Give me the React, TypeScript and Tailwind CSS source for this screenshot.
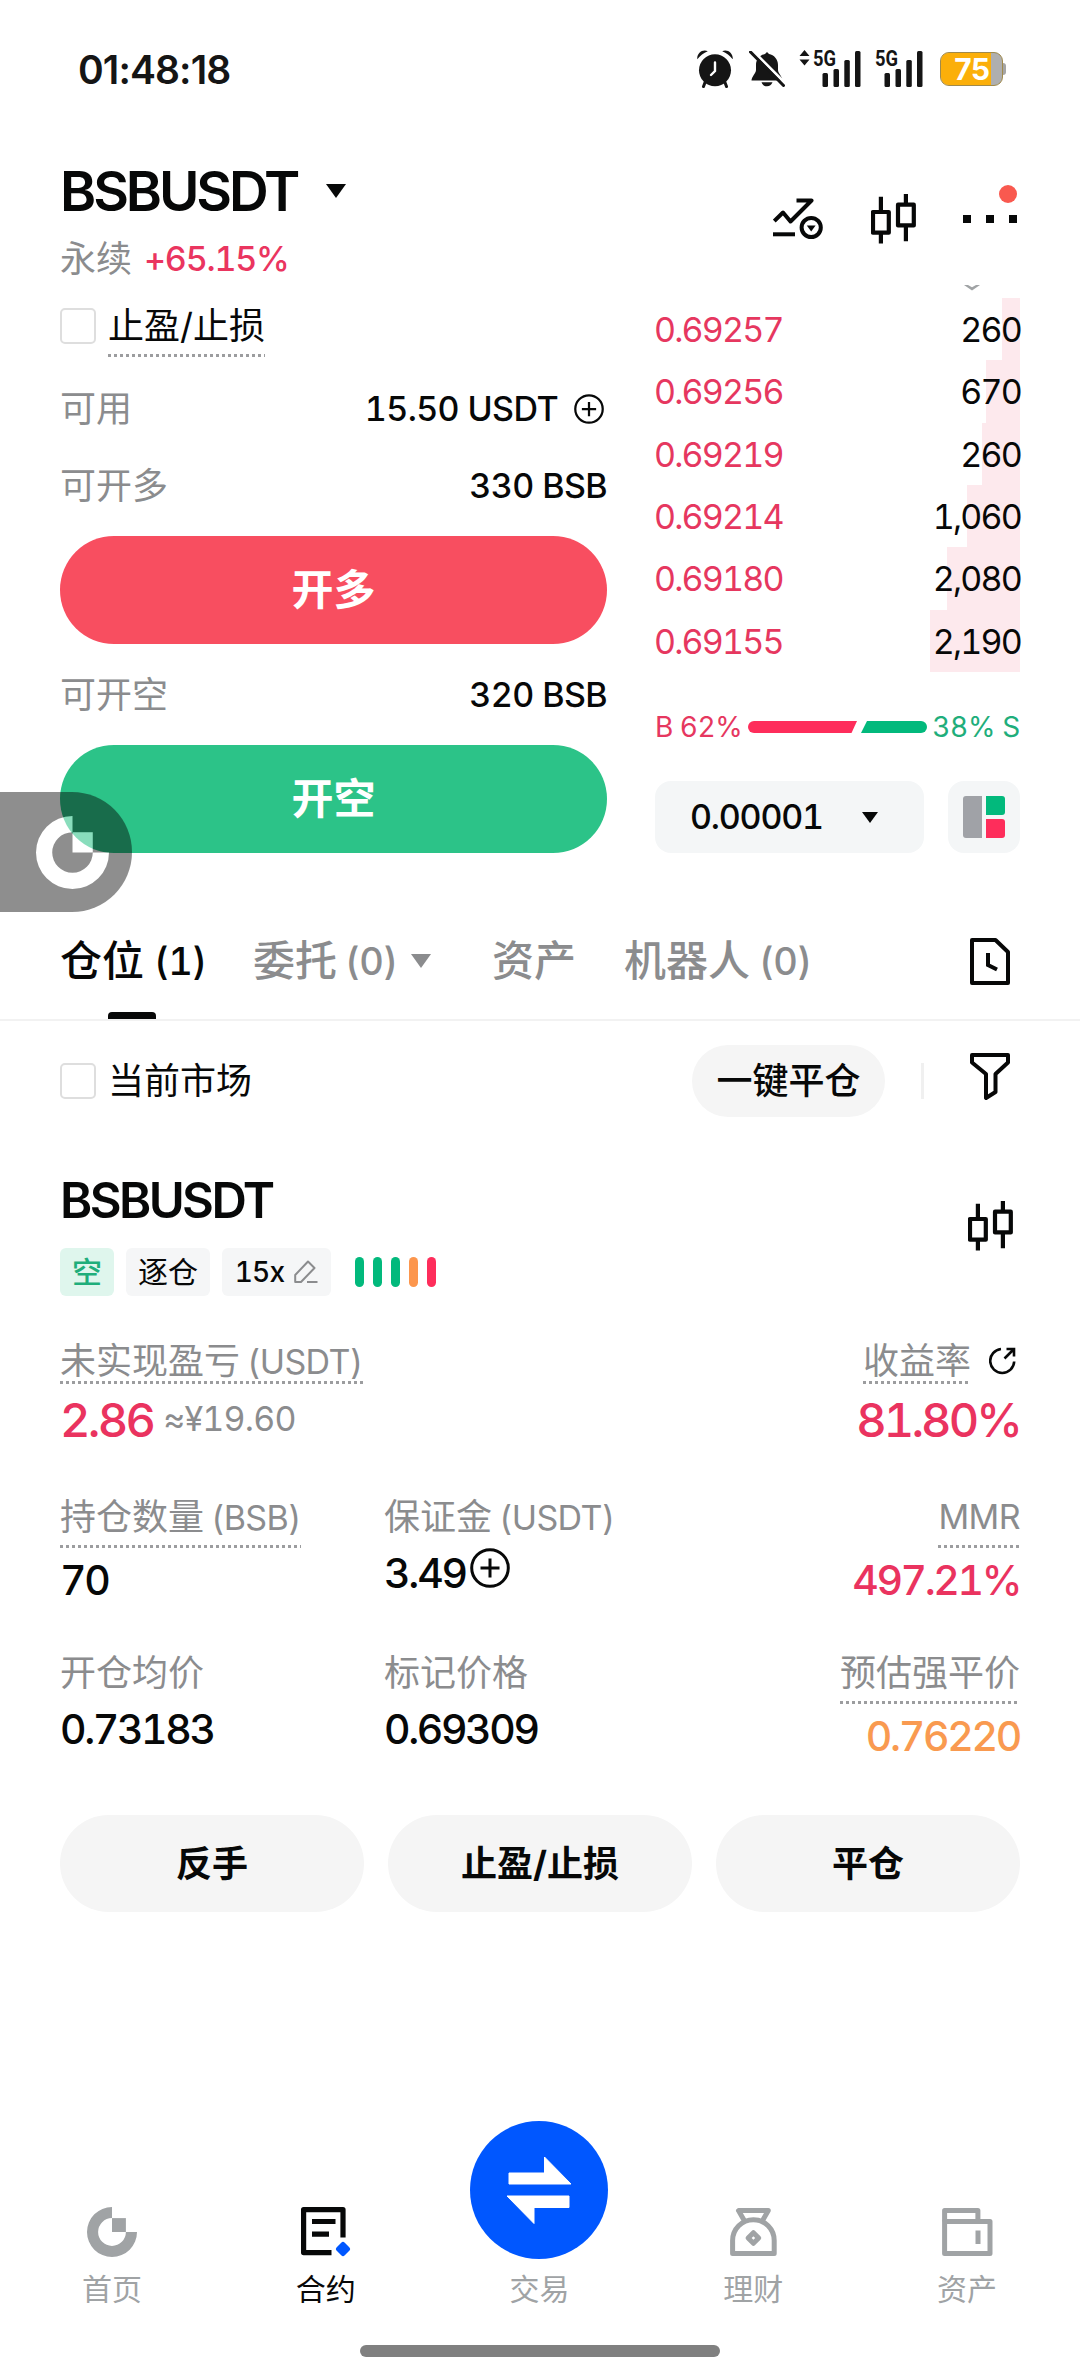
import type { ReactNode } from 'react';

interface IconProps {
  className?: string;
}

const asks = [
  { price: '0.69257', amount: '260', depth: 18 },
  { price: '0.69256', amount: '670', depth: 34 },
  { price: '0.69219', amount: '260', depth: 38 },
  { price: '0.69214', amount: '1,060', depth: 53 },
  { price: '0.69180', amount: '2,080', depth: 73 },
  { price: '0.69155', amount: '2,190', depth: 90 },
];

const riskBars = ['bg-[#02b97c]', 'bg-[#02b97c]', 'bg-[#02b97c]', 'bg-[#fc964d]', 'bg-[#fe2d5b]'];

function AlarmIcon() {
  return (
    <svg width="36" height="38" viewBox="0 0 36 38" fill="#151515">
      <circle cx="18" cy="20.3" r="16" />
      <path d="M0.3 9.3C-0.5 3.5 5.5-1.3 10.8 1.3C6.5 3 3.2 5.7 0.3 9.3ZM35.7 9.3C36.5 3.5 30.5-1.3 25.2 1.3C29.5 3 32.8 5.7 35.7 9.3Z" />
      <path d="M8 32.5L6.5 36.5M28 32.5L29.5 36.5" stroke="#151515" strokeWidth="3" strokeLinecap="round" />
      <path d="M18 12.5V21L14 25" stroke="#fff" strokeWidth="2.4" strokeLinecap="round" fill="none" />
    </svg>
  );
}

function BellOffIcon() {
  return (
    <svg width="36" height="36" viewBox="0 0 36 36" fill="#151515">
      <path d="M18 1L20 3C25 4 29 8 29 14V19C29 22 33.5 26 33.5 29.5H2.5C2.5 26 7 22 7 19V14C7 8 11 4 16 3Z" />
      <path d="M12.5 31.3H23.5C22.5 34 20.5 35.2 18 35.2S13.5 34 12.5 31.3Z" />
      <path d="M3.5 -0.5L37 33" stroke="#fff" strokeWidth="3" />
      <path d="M1.5 1L34.5 34.5" stroke="#151515" strokeWidth="3" strokeLinecap="round" />
    </svg>
  );
}

function Signal({ arrows = false }: { arrows?: boolean }) {
  return (
    <svg
      className="-my-2"
      width={arrows ? 62 : 49}
      height="54"
      viewBox={arrows ? '-14 -8 62 54' : '-1 -8 49 54'}
      fill="#151515"
    >
      {arrows && <path d="M-13.5 6L-8.5 0L-3.5 6ZM-13.5 9.5L-8.5 15.5L-3.5 9.5Z" />}
      <text
        x="0"
        y="16"
        fontSize="22"
        fontWeight="700"
        textLength="23"
        lengthAdjust="spacingAndGlyphs"
        fontFamily="Roboto, sans-serif"
      >
        5G
      </text>
      <rect x="9.5" y="23" width="5.5" height="14" rx="1.5" />
      <rect x="20.5" y="19" width="5.5" height="18" rx="1.5" />
      <rect x="31.3" y="10" width="5.5" height="27" rx="1.5" />
      <rect x="42" y="1" width="5.5" height="36" rx="1.5" />
    </svg>
  );
}

function TrendIcon() {
  return (
    <svg width="50" height="42" viewBox="0 0 50 42" fill="none" stroke="#070808" strokeWidth="4">
      <path d="M1.3 23L10 14.5L17.5 23.5L38.5 2.5H23.5" strokeLinejoin="round" />
      <path d="M0 36.3H22" />
      <circle cx="38.2" cy="29.5" r="9.6" />
      <path d="M33.8 27.5H42.6L38.2 33.5Z" fill="#070808" stroke="none" />
    </svg>
  );
}

function CandleIcon({ className }: IconProps) {
  return (
    <svg className={className} width="45" height="50" viewBox="0 0 45 50" fill="none" stroke="#070808" strokeWidth="4.2">
      <path d="M9.9 2.7V17M9.9 40V49.5M34.9 0V9M34.9 32V47.2" />
      <rect x="2" y="18" width="15.8" height="20.7" strokeLinejoin="round" />
      <rect x="27" y="10.7" width="15.8" height="20.7" strokeLinejoin="round" />
    </svg>
  );
}

function PlusCircle({ className }: IconProps) {
  return (
    <svg className={className} viewBox="0 0 40 40" fill="none" stroke="#070808" strokeWidth="3">
      <circle cx="20" cy="20" r="18.3" />
      <path d="M20 10.5V29.5M10.5 20H29.5" />
    </svg>
  );
}

function HistoryIcon() {
  return (
    <svg width="40" height="47" viewBox="0 0 40 47" fill="none" stroke="#070808" strokeWidth="4" strokeLinejoin="round">
      <path d="M2 2H25.5L38 14V45H2Z" />
      <path d="M18 15V27L27 31.5" strokeLinejoin="miter" />
    </svg>
  );
}

function FilterIcon() {
  return (
    <svg width="40" height="47" viewBox="0 0 40 47" fill="none" stroke="#070808" strokeWidth="4" strokeLinejoin="round">
      <path d="M2 2H38V9.5L25.5 21V39L16 45V21L2 9.5Z" />
    </svg>
  );
}

function PencilIcon() {
  return (
    <svg width="24" height="24" viewBox="0 0 24 24" fill="none" stroke="#8b8c8e" strokeWidth="2">
      <path d="M1.2 22V15L14 1.5L20.5 8L7 22Z" strokeLinejoin="round" />
      <path d="M13 22H23.5" />
    </svg>
  );
}

function ShareIcon() {
  return (
    <svg width="27" height="28" viewBox="0 0 27 28" fill="none" stroke="#070808" strokeWidth="2.6">
      <path d="M12 2A12 12 0 1 0 25.2 14.5" />
      <path d="M15.5 11.5L24.5 2.5M17.5 2H25V9.5" />
    </svg>
  );
}

// ring with an open upper right quarter and a square tucked into it
function BrandMark({ className }: IconProps) {
  return (
    <svg className={className} viewBox="0 0 72 72" fill="currentColor">
      <path d="M36 0A36 36 0 1 0 72 36H56A20 20 0 1 1 36 16Z" />
      <path d="M36 16H56V36H36Z" />
    </svg>
  );
}

function ContractIcon() {
  return (
    <svg width="50" height="50" viewBox="0 0 50 50" fill="none" stroke="#070808" strokeWidth="5.2">
      <path d="M42 30.5V2.6H2.6V45.6H30.5" strokeLinejoin="round" />
      <path d="M11 14.5H34.5M11 27.2H28" />
      <path d="M42 37.5L46.5 42L42 46.5L37.5 42Z" fill="#0057ff" stroke="#0057ff" strokeWidth="5" strokeLinejoin="round" />
    </svg>
  );
}

function TransferIcon() {
  return (
    <svg width="66" height="68" viewBox="0 0 66 68" fill="#fff" stroke="#fff" strokeWidth="1" strokeLinejoin="round">
      <path d="M3 17H38.5V1L65 28H3Z" />
      <path d="M63 51.5H28V67.5L1 40H63Z" />
    </svg>
  );
}

function MoneyBagIcon() {
  return (
    <svg width="47" height="49" viewBox="0 0 47 49" fill="none" stroke="#a0a3a5" strokeWidth="5" strokeLinejoin="round">
      <path d="M14.5 13L8.5 2.6H38.3L32.3 13" />
      <path d="M2.6 45.6V32.5A20.8 20.8 0 0 1 44.2 32.5V45.6Z" />
      <path d="M23.4 24.7L28.7 30L23.4 35.3L18.1 30Z" />
    </svg>
  );
}

function WalletIcon() {
  return (
    <svg width="51" height="49" viewBox="0 0 51 49" fill="none" stroke="#a0a3a5" strokeWidth="5" strokeLinejoin="round">
      <path d="M2.6 13.5V2.6H35.9V13.5" />
      <path d="M2.6 13.5H48V45.5H2.6Z" />
      <path d="M36 22.5V36" />
    </svg>
  );
}

function Caret({ className }: IconProps) {
  return (
    <svg className={className} viewBox="0 0 20 14" preserveAspectRatio="none" fill="currentColor">
      <path d="M0 0H20L10 14Z" />
    </svg>
  );
}

function Dotted({ children, gap = 'mt-0.5' }: { children: ReactNode; gap?: string }) {
  return (
    <div className="flex flex-col">
      <div className="flex h-12 items-center whitespace-nowrap">{children}</div>
      <div className={`h-[3px] bg-[repeating-linear-gradient(90deg,#9c9d9f_0_3px,transparent_3px_6px)] ${gap}`} />
    </div>
  );
}

function Checkbox() {
  return <div className="size-9 shrink-0 rounded-[5px] border-[2.5px] border-[#dedede]" />;
}

function Latin({ children }: { children: ReactNode }) {
  return <span className="text-[34px] tracking-[-0.6px]">{children}</span>;
}

function StatRow({ label, value, children }: { label: string; value: string; children?: ReactNode }) {
  return (
    <div className="flex h-12 items-center justify-between">
      <span className="text-[#8b8c8e]">{label}</span>
      <div className="flex items-center">
        <span className="text-[34px] font-medium tracking-[-0.6px]">{value}</span>
        {children}
      </div>
    </div>
  );
}

function StatusBar() {
  return (
    <div className="flex h-[138px] items-center justify-between pr-[74px] pl-[78px]">
      <span className="text-[39px] font-semibold tracking-[-0.9px] text-[#151515] proportional-nums">01:48:18</span>
      <div className="flex items-center">
        <AlarmIcon />
        <div className="ml-4">
          <BellOffIcon />
        </div>
        <div className="ml-3.5 flex gap-[13px]">
          <Signal arrows />
          <Signal />
        </div>
        <div className="ml-[17px] flex items-center">
          <div className="flex h-[34px] w-[63px] overflow-hidden rounded-[9px] border border-[#a08a4c] bg-[#afafaf]">
            <div className="flex w-[50px] items-center justify-end bg-[#fbaf0a] pr-0.5 text-[30px] leading-none font-bold tracking-[-1.5px] text-white">
              75
            </div>
          </div>
          <div className="h-3 w-[3px] rounded-r-sm bg-[#a5a5a5]" />
        </div>
      </div>
    </div>
  );
}

function Header() {
  return (
    <div className="flex h-[147px] justify-between px-[60px] pt-[23px]">
      <div>
        <div className="flex h-[60px] items-center">
          <h1 className="text-[55px] font-semibold tracking-[-3.1px]">BSBUSDT</h1>
          <Caret className="ml-[29px] h-3.5 w-5" />
        </div>
        <div className="mt-[15px] flex h-[46px] items-center">
          <span className="text-[#8b8c8e]">永续</span>
          <span className="ml-3 text-[34px] font-medium tracking-[-1.2px] text-[#ea355f]">+65.15%</span>
        </div>
      </div>
      <div className="flex h-[115px] items-center">
        <TrendIcon />
        <CandleIcon className="ml-12" />
        <div className="relative mr-[3px] ml-[47px] flex gap-[15px]">
          <div className="size-2 bg-[#070808]" />
          <div className="size-2 bg-[#070808]" />
          <div className="size-2 bg-[#070808]" />
          <div className="absolute -top-[30px] right-0 size-[18px] rounded-full bg-[#f9594f]" />
        </div>
      </div>
    </div>
  );
}

function OrderForm() {
  return (
    <div className="w-[547px] pt-[17px]">
      <div className="flex gap-3">
        <div className="pt-1.5">
          <Checkbox />
        </div>
        <Dotted gap="mt-1">止盈/止损</Dotted>
      </div>
      <div className="mt-7">
        <StatRow label="可用" value="15.50 USDT">
          <PlusCircle className="mr-[3px] ml-4 size-[30px]" />
        </StatRow>
      </div>
      <div className="mt-[29px]">
        <StatRow label="可开多" value="330 BSB" />
      </div>
      <button className="mt-[26px] flex h-[108px] w-full items-center justify-center rounded-full bg-[#f84e60] text-[42px] font-bold text-white">
        开多
      </button>
      <div className="mt-[27px]">
        <StatRow label="可开空" value="320 BSB" />
      </div>
      <button className="mt-[26px] flex h-[108px] w-full items-center justify-center rounded-full bg-[#2cc388] text-[42px] font-bold text-white">
        开空
      </button>
    </div>
  );
}

function OrderBook() {
  return (
    <div className="w-[365px]">
      <div className="flex h-[13px] justify-end pr-10">
        <svg width="16" height="6" viewBox="0 0 16 6" fill="#a0a3a5">
          <path d="M0 0H4L8 2.3L12 0H16L8 5.6Z" />
        </svg>
      </div>
      <div className="grid h-[374px] grid-rows-6">
        {asks.map((ask) => (
          <div key={ask.price} className="relative flex items-center justify-between pt-0.5 text-[34px]">
            <div className="absolute inset-y-0 right-0 bg-[#fde9ed]" style={{ width: ask.depth }} />
            <span className="relative -ml-px tracking-[-1.8px] text-[#e6375f]">{ask.price}</span>
            <span className="relative -mr-px tracking-[-1.8px]">{ask.amount}</span>
          </div>
        ))}
      </div>
      <div className="mt-10 flex h-[30px] items-center justify-between text-[28px] whitespace-nowrap">
        <span className="tracking-[-0.5px] text-[#e6375f]">B 62%</span>
        <svg width="179" height="12" viewBox="0 0 179 12">
          <path d="M6 0H109L103.5 12H6A6 6 0 0 1 6 0Z" fill="#fe2d5b" />
          <path d="M119 0H173A6 6 0 0 1 173 12H113Z" fill="#02b97c" />
        </svg>
        <span className="tracking-[-0.3px] text-[#1fae7b]">38% S</span>
      </div>
      <div className="mt-[39px] flex justify-between">
        <div className="flex h-[72px] w-[269px] items-center rounded-2xl bg-[#f4f6f7] pl-[35px]">
          <span className="w-[130px] text-[34px] font-medium tracking-[-1.2px]">0.00001</span>
          <Caret className="ml-[42px] h-[11px] w-4" />
        </div>
        <div className="flex size-[72px] items-center justify-center gap-1 rounded-2xl bg-[#f4f6f7]">
          <div className="h-[42px] w-[19px] rounded-l-[3px] bg-[#a0a2a7]" />
          <div className="flex flex-col gap-1">
            <div className="h-[19px] w-[19px] rounded-r-[3px] bg-[#02b97c]" />
            <div className="h-[19px] w-[19px] rounded-r-[3px] bg-[#fe2d5b]" />
          </div>
        </div>
      </div>
    </div>
  );
}

function Tabs() {
  return (
    <div className="mt-[50px] flex h-[118px] items-center border-b-2 border-[#f2f2f2] px-[60px] text-[42px] font-medium whitespace-nowrap text-[#8b8c8e]">
      <div className="relative flex h-full w-[193px] items-center text-[#070808]">
        仓位<span className="ml-2.5 text-[38px] tracking-[-0.6px]">(1)</span>
        <div className="absolute bottom-0 left-12 h-[7px] w-12 rounded-t-[4px] bg-[#070808]" />
      </div>
      <div className="flex w-[239px] items-center">
        委托<span className="ml-2 text-[38px] tracking-[-0.6px]">(0)</span>
        <Caret className="ml-[13px] h-3.5 w-5" />
      </div>
      <div className="w-[132px]">资产</div>
      <div className="flex items-center">
        机器人<span className="ml-[9px] text-[38px] tracking-[-0.6px]">(0)</span>
      </div>
      <div className="mr-2.5 ml-auto">
        <HistoryIcon />
      </div>
    </div>
  );
}

function Filters() {
  return (
    <div className="mt-6 flex h-[72px] items-center px-[60px]">
      <Checkbox />
      <span className="ml-3">当前市场</span>
      <button className="ml-auto h-[72px] w-[193px] rounded-full bg-[#f5f5f5] font-medium">一键平仓</button>
      <div className="ml-9 h-9 w-[3px] bg-[#f0f0f0]" />
      <div className="-mt-2.5 mr-2.5 ml-[46px]">
        <FilterIcon />
      </div>
    </div>
  );
}

function Position() {
  return (
    <div className="px-[60px] pt-[53px]">
      <div className="flex items-center justify-between">
        <div>
          <h2 className="flex h-[60px] items-center text-[49px] font-semibold tracking-[-2.6px]">BSBUSDT</h2>
          <div className="mt-[18px] flex h-12 items-center gap-3 text-[30px]">
            <span className="flex h-full w-[54px] items-center justify-center rounded-md bg-[#dff6ed] font-medium text-[#1fae7b]">
              空
            </span>
            <span className="flex h-full w-[84px] items-center justify-center rounded-md bg-[#f5f6f7]">逐仓</span>
            <span className="flex h-full w-[109px] items-center justify-center gap-2.5 rounded-md bg-[#f5f6f7] text-[28px] font-medium tracking-[-0.8px]">
              15x
              <PencilIcon />
            </span>
            <div className="ml-3 flex gap-[9px]">
              {riskBars.map((color, i) => (
                <div key={i} className={`h-[30px] w-[9px] rounded-full ${color}`} />
              ))}
            </div>
          </div>
        </div>
        <CandleIcon className="mr-[7px] mb-[14px]" />
      </div>

      <div className="mt-[41px] flex justify-between text-[#8b8c8e]">
        <div>
          <Dotted gap="-mt-1">
            未实现盈亏<span className="ml-[7px]"><Latin>(USDT)</Latin></span>
          </Dotted>
          <div className="mt-[11px] flex h-12 items-center">
            <span className="text-[47px] font-medium tracking-[-2.7px] text-[#ea335f]">2.86</span>
            <span className="ml-2.5 text-[34px] tracking-[-0.8px]">≈¥19.60</span>
          </div>
        </div>
        <div className="flex flex-col items-end">
          <div className="flex">
            <Dotted gap="-mt-1">收益率</Dotted>
            <div className="mt-2.5 mr-1 ml-[18px]">
              <ShareIcon />
            </div>
          </div>
          <div className="mt-[11px] flex h-12 items-center text-[47px] font-medium tracking-[-2.9px] text-[#ea335f]">81.80%</div>
        </div>
      </div>

      <div className="mt-[50px] flex h-[112px] text-[#8b8c8e]">
        <div className="flex w-[324px] flex-col items-start">
          <Dotted gap="mt-1">
            持仓数量<span className="ml-[7px]"><Latin>(BSB)</Latin></span>
          </Dotted>
          <div className="mt-2 flex h-12 items-center text-[41px] font-medium tracking-[-2.4px] text-[#070808]">70</div>
        </div>
        <div>
          <div className="flex h-12 items-center">
            保证金<span className="ml-[7px]"><Latin>(USDT)</Latin></span>
          </div>
          <div className="mt-2 flex h-12 items-center text-[41px] font-medium tracking-[-2.2px] text-[#070808]">
            3.49
            <PlusCircle className="mb-2.5 ml-1 size-10" />
          </div>
        </div>
        <div className="ml-auto flex flex-col items-end">
          <Dotted gap="mt-1">
            <Latin>MMR</Latin>
          </Dotted>
          <div className="mt-2 flex h-12 items-center text-[41px] font-medium tracking-[-2.4px] text-[#ea335f]">497.21%</div>
        </div>
      </div>

      <div className="mt-11 flex h-[112px] text-[#8b8c8e]">
        <div className="w-[324px]">
          <div className="flex h-12 items-center">开仓均价</div>
          <div className="mt-2 flex h-12 items-center text-[41px] font-medium tracking-[-2.4px] text-[#070808]">0.73183</div>
        </div>
        <div>
          <div className="flex h-12 items-center">标记价格</div>
          <div className="mt-2 flex h-12 items-center text-[41px] font-medium tracking-[-2.4px] text-[#070808]">0.69309</div>
        </div>
        <div className="ml-auto flex flex-col items-end">
          <Dotted gap="mt-1">预估强平价</Dotted>
          <div className="mt-2 flex h-12 items-center text-[41px] font-medium tracking-[-2.3px] text-[#f99a50]">0.76220</div>
        </div>
      </div>

      <div className="mt-[54px] grid grid-cols-3 gap-6">
        {['反手', '止盈/止损', '平仓'].map((label) => (
          <button key={label} className="h-[97px] rounded-full bg-[#f5f5f5] font-bold">
            {label}
          </button>
        ))}
      </div>
    </div>
  );
}

function NavItem({ icon, label, active }: { icon: ReactNode; label: string; active?: boolean }) {
  return (
    <div className={`flex flex-1 flex-col items-center justify-end text-[30px] ${active ? 'text-[#070808]' : 'text-[#a0a3a5]'}`}>
      {icon}
      <span className="mt-3 flex h-10 items-center">{label}</span>
    </div>
  );
}

function BottomNav() {
  return (
    <div className="mt-[207px] flex h-[190px] pr-1.5 pl-[5px]">
      <NavItem icon={<BrandMark className="size-[50px]" />} label="首页" />
      <NavItem icon={<ContractIcon />} label="合约" active />
      <NavItem
        icon={
          <div className="-mb-0.5 flex size-[138px] items-center justify-center rounded-full bg-[#0057ff]">
            <TransferIcon />
          </div>
        }
        label="交易"
      />
      <NavItem icon={<MoneyBagIcon />} label="理财" />
      <NavItem icon={<WalletIcon />} label="资产" />
    </div>
  );
}

export default function App() {
  return (
    <div className="relative h-[2378px] w-[1080px] overflow-hidden bg-white font-['Inter','Noto_Sans_CJK_SC',sans-serif] text-[36px] leading-none text-[#070808] tabular-nums">
      <StatusBar />
      <Header />
      <div className="flex justify-between px-[60px]">
        <OrderForm />
        <OrderBook />
      </div>
      <Tabs />
      <Filters />
      <Position />
      <BottomNav />
      <div className="mx-auto mt-9 h-3 w-[360px] rounded-full bg-[#808080]" />

      {/* floating shortcut docked to the left edge */}
      <div className="absolute top-[792px] left-0 flex h-[120px] w-[132px] items-center rounded-r-full bg-black pl-9 opacity-[0.44]">
        <BrandMark className="size-[73px] text-white" />
      </div>
    </div>
  );
}
